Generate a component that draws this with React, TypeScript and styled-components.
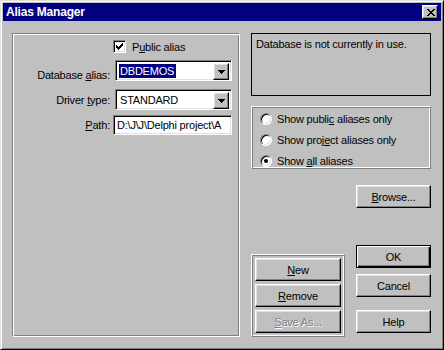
import React from "react";
import styled, { createGlobalStyle, css } from "styled-components";

const GlobalStyle = createGlobalStyle`
  html, body {
    margin: 0;
    padding: 0;
    background: #c0c0c0;
  }
  body {
    font-family: "Liberation Sans", Arial, sans-serif;
    font-size: 11px;
    letter-spacing: -0.2px;
    color: #000;
  }
  * {
    box-sizing: border-box;
  }
`;

// win95 bevels
const raised = css`
  border: 1px solid;
  border-color: #fff #000 #000 #fff;
  box-shadow: inset -1px -1px #808080, inset 1px 1px #dfdfdf;
`;

const sunken = css`
  border: 1px solid;
  border-color: #808080 #fff #fff #808080;
  box-shadow: inset 1px 1px #000, inset -1px -1px #dfdfdf;
`;

const App: React.FC = () => {
  return (
    <>
      <GlobalStyle />
      <Window>
        <TitleBar>
          <TitleText>Alias Manager</TitleText>
          <CloseButton>
            <svg width="8" height="7" viewBox="0 0 8 7" shapeRendering="crispEdges">
              <path d="M0 0h2v1h-2zM6 0h2v1h-2zM1 1h2v1h-2zM5 1h2v1h-2zM2 2h4v1h-4zM3 3h2v1h-2zM2 4h4v1h-4zM1 5h2v1h-2zM5 5h2v1h-2zM0 6h2v1h-2zM6 6h2v1h-2z" fill="#000" />
            </svg>
          </CloseButton>
        </TitleBar>

        <Body>
          <LeftPanel>
            <Field $mt={6}>
              <Label />
              <CheckWrap>
                <CheckBox>
                  <svg width="7" height="7" viewBox="0 0 7 7" shapeRendering="crispEdges">
                    <path d="M6 0h1v3h-1zM5 1h1v3h-1zM4 2h1v3h-1zM3 3h1v3h-1zM2 4h1v3h-1zM1 3h1v3h-1zM0 2h1v3h-1z" fill="#000" />
                  </svg>
                </CheckBox>
                <span>
                  P<u>u</u>blic alias
                </span>
              </CheckWrap>
            </Field>

            <Field $mt={7}>
              <Label $drop={4}>
                Database <u>a</u>lias:
              </Label>
              <Combo>
                <ComboText>
                  <Selected>DBDEMOS</Selected>
                </ComboText>
                <DropButton>
                  <svg width="7" height="4" viewBox="0 0 7 4" shapeRendering="crispEdges">
                    <path d="M0 0h7v1h-7zM1 1h5v1h-5zM2 2h3v1h-3zM3 3h1v1h-1z" fill="#000" />
                  </svg>
                </DropButton>
              </Combo>
            </Field>

            <Field $mt={8}>
              <Label>
                Driver <u>t</u>ype:
              </Label>
              <Combo>
                <ComboText>
                  <Plain>STANDARD</Plain>
                </ComboText>
                <DropButton>
                  <svg width="7" height="4" viewBox="0 0 7 4" shapeRendering="crispEdges">
                    <path d="M0 0h7v1h-7zM1 1h5v1h-5zM2 2h3v1h-3zM3 3h1v1h-1z" fill="#000" />
                  </svg>
                </DropButton>
              </Combo>
            </Field>

            <Field $mt={5}>
              <Label>
                <u>P</u>ath:
              </Label>
              <Edit>{"D:\\J\\J\\Delphi project\\A"}</Edit>
            </Field>
          </LeftPanel>

          <RightColumn>
            <InfoBox>Database is not currently in use.</InfoBox>

            <RadioGroup>
              <RadioItem>
                <Radio />
                <span>
                  Show publi<u>c</u> aliases only
                </span>
              </RadioItem>
              <RadioItem>
                <Radio />
                <span>
                  Show proj<u>e</u>ct aliases only
                </span>
              </RadioItem>
              <RadioItem>
                <Radio $checked />
                <span>
                  Show <u>a</u>ll aliases
                </span>
              </RadioItem>
            </RadioGroup>

            <BrowseRow>
              <Button $w={75}>
                <u>B</u>rowse...
              </Button>
            </BrowseRow>

            <BottomRow>
              <ButtonGroup>
                <Button $w={86}>
                  <u>N</u>ew
                </Button>
                <Button $w={86}>
                  <u>R</u>emove
                </Button>
                <Button $w={86} $disabled>
                  <u>S</u>ave As...
                </Button>
              </ButtonGroup>

              <DialogButtons>
                <Button $w={75} $default>
                  OK
                </Button>
                <Button $w={75} $mt={6}>
                  Cancel
                </Button>
                <Button $w={75} $mt={13}>
                  Help
                </Button>
              </DialogButtons>
            </BottomRow>
          </RightColumn>
        </Body>
      </Window>
    </>
  );
};

export default App;

const Window = styled.div`
  width: 444px;
  height: 350px;
  background: #c0c0c0;
  border: 1px solid;
  border-color: #dfdfdf #000 #000 #dfdfdf;
  box-shadow: inset 1px 1px #fff, inset -1px -1px #808080;
  padding: 2px;
  display: flex;
  flex-direction: column;
`;

const TitleBar = styled.div`
  height: 18px;
  background: #000080;
  display: flex;
  align-items: center;
  padding: 0 3px 0 3px;
`;

const TitleText = styled.div`
  color: #fff;
  font-weight: bold;
  font-size: 12px;
  letter-spacing: -0.2px;
`;

const CloseButton = styled.div`
  ${raised};
  margin-left: auto;
  width: 16px;
  height: 14px;
  background: #c0c0c0;
  display: flex;
  align-items: center;
  justify-content: center;
  padding-left: 1px;
`;

const Body = styled.div`
  display: flex;
  padding: 12px 0 0 9px;
`;

const LeftPanel = styled.div`
  width: 228px;
  height: 304px;
  border: 1px solid;
  border-color: #808080 #fff #fff #808080;
  box-shadow: inset 1px 1px #fff, inset -1px -1px #808080;
  display: flex;
  flex-direction: column;
`;

const Field = styled.div<{ $mt: number }>`
  display: flex;
  align-items: center;
  gap: 3px;
  margin-top: ${(p) => p.$mt}px;
`;

const Label = styled.div<{ $drop?: number }>`
  width: 97px;
  flex-shrink: 0;
  text-align: right;
  white-space: nowrap;
  padding-top: ${(p) => (p.$drop ? p.$drop * 2 : 0)}px;
`;

const CheckWrap = styled.div`
  display: flex;
  align-items: center;
  gap: 6px;
  height: 13px;
`;

const CheckBox = styled.div`
  ${sunken};
  width: 13px;
  height: 13px;
  background: #fff;
  display: flex;
  align-items: center;
  justify-content: center;
`;

const Combo = styled.div`
  ${sunken};
  width: 117px;
  height: 21px;
  margin-left: 2px;
  background: #fff;
  display: flex;
  padding: 2px;
`;

const ComboText = styled.div`
  flex: 1;
  display: flex;
  align-items: center;
  padding-left: 1px;
`;

const Selected = styled.span`
  background: #000080;
  color: #fff;
  padding: 1px 2px 1px 1px;
  line-height: 12px;
`;

const Plain = styled.span`
  padding-left: 1px;
`;

const DropButton = styled.div`
  ${raised};
  width: 16px;
  height: 17px;
  background: #c0c0c0;
  display: flex;
  align-items: center;
  justify-content: center;
`;

const Edit = styled.div`
  ${sunken};
  width: 119px;
  height: 20px;
  background: #fff;
  padding: 0 2px 0 3px;
  display: flex;
  align-items: center;
  white-space: nowrap;
`;

const RightColumn = styled.div`
  width: 180px;
  margin-left: 11px;
  display: flex;
  flex-direction: column;
`;

const InfoBox = styled.div`
  height: 63px;
  border: 1px solid #000;
  padding: 4px 4px;
`;

const RadioGroup = styled.div`
  height: 63px;
  margin-top: 10px;
  border: 1px solid;
  border-color: #fff #808080 #808080 #fff;
  box-shadow: inset 1px 1px #808080, inset -1px -1px #fff;
  padding: 1px 0 0 8px;
`;

const RadioItem = styled.div`
  height: 21px;
  display: flex;
  align-items: center;
  gap: 5px;
`;

const Radio = styled.div<{ $checked?: boolean }>`
  width: 12px;
  height: 12px;
  border-radius: 50%;
  background: #fff;
  border: 1px solid;
  border-color: #808080 #fff #fff #808080;
  box-shadow: inset 1px 1px #000, inset -1px -1px #dfdfdf;
  display: flex;
  align-items: center;
  justify-content: center;

  &::after {
    content: "";
    width: 4px;
    height: 4px;
    border-radius: 50%;
    background: ${(p) => (p.$checked ? "#000" : "transparent")};
  }
`;

const BrowseRow = styled.div`
  display: flex;
  justify-content: flex-end;
  margin-top: 16px;
`;

const BottomRow = styled.div`
  display: flex;
  justify-content: space-between;
  align-items: flex-start;
  margin-top: 37px;
`;

const ButtonGroup = styled.div`
  width: 94px;
  height: 83px;
  margin-top: 9px;
  border: 1px solid;
  border-color: #fff #808080 #808080 #fff;
  box-shadow: inset 1px 1px #808080, inset -1px -1px #fff;
  padding: 3px 0 0 3px;
  display: flex;
  flex-direction: column;
  gap: 3px;
`;

const DialogButtons = styled.div`
  display: flex;
  flex-direction: column;
`;

const Button = styled.div<{ $w: number; $default?: boolean; $disabled?: boolean; $mt?: number }>`
  ${raised};
  width: ${(p) => p.$w}px;
  height: 23px;
  margin-top: ${(p) => p.$mt ?? 0}px;
  background: #c0c0c0;
  display: flex;
  align-items: center;
  justify-content: center;
  color: ${(p) => (p.$disabled ? "#808080" : "#000")};
  text-shadow: ${(p) => (p.$disabled ? "1px 1px #fff" : "none")};
  ${(p) =>
    p.$default &&
    css`
      border: 1px solid #000;
      box-shadow: inset 1px 1px #fff, inset -1px -1px #000, inset -2px -2px #808080;
    `}
`;
